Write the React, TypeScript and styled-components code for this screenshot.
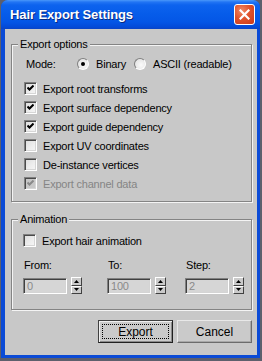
import styled, { createGlobalStyle } from "styled-components";

const GlobalStyle = createGlobalStyle`
  html, body {
    margin: 0;
    padding: 0;
    background: #5d5f6c;
  }
  body {
    width: 262px;
    height: 361px;
    overflow: hidden;
    font-family: "Liberation Sans", Arial, sans-serif;
  }
`;

const options = [
  { label: "Export root transforms", checked: true },
  { label: "Export surface dependency", checked: true },
  { label: "Export guide dependency", checked: true },
  { label: "Export UV coordinates", checked: false },
  { label: "De-instance vertices", checked: false },
  { label: "Export channel data", checked: true, disabled: true },
];

const spinFields = [
  { label: "From:", value: "0" },
  { label: "To:", value: "100" },
  { label: "Step:", value: "2" },
];

export default function App() {
  return (
    <>
      <GlobalStyle />
      <Window>
        <TitleBar>
          <Title>Hair Export Settings</Title>
          <CloseButton>
            <svg width="11" height="11" viewBox="0 0 11 11">
              <path d="M1.5 1.5 L9.5 9.5 M9.5 1.5 L1.5 9.5" stroke="#fff" strokeWidth="2.2" strokeLinecap="square" />
            </svg>
          </CloseButton>
        </TitleBar>
        <Client>
          <Group>
            <Legend>Export options</Legend>
            <GroupBody $pad="3px 0 8px 12px">
              <ModeRow>
                <ModeLabel>Mode:</ModeLabel>
                <RadioOption $width={57}>
                  <Radio $selected />
                  <span>Binary</span>
                </RadioOption>
                <RadioOption>
                  <Radio />
                  <span>ASCII (readable)</span>
                </RadioOption>
              </ModeRow>
              <CheckList>
                {options.map((o) => (
                  <CheckRow key={o.label} $disabled={o.disabled}>
                    <CheckBox checked={o.checked} disabled={o.disabled} />
                    <span>{o.label}</span>
                  </CheckRow>
                ))}
              </CheckList>
            </GroupBody>
          </Group>

          <Group $top={11}>
            <Legend>Animation</Legend>
            <GroupBody $pad="5px 0 15px 11px">
              <CheckRow>
                <CheckBox checked={false} />
                <span>Export hair animation</span>
              </CheckRow>
              <SpinGrid>
                {spinFields.map((f) => (
                  <SpinField key={f.label}>
                    <SpinLabel>{f.label}</SpinLabel>
                    <SpinRow>
                      <NumberBox>{f.value}</NumberBox>
                      <Spinner>
                        <SpinHalf>
                          <svg width="5" height="3" viewBox="0 0 5 3">
                            <path d="M2.5 0 L5 3 L0 3 Z" fill="#000" />
                          </svg>
                        </SpinHalf>
                        <SpinHalf>
                          <svg width="5" height="3" viewBox="0 0 5 3">
                            <path d="M0 0 L5 0 L2.5 3 Z" fill="#000" />
                          </svg>
                        </SpinHalf>
                      </Spinner>
                    </SpinRow>
                  </SpinField>
                ))}
              </SpinGrid>
            </GroupBody>
          </Group>

          <ButtonRow>
            <DialogButton $default>
              <FocusRing>Export</FocusRing>
            </DialogButton>
            <DialogButton>Cancel</DialogButton>
          </ButtonRow>
        </Client>
      </Window>
    </>
  );
}

function CheckBox({ checked, disabled }: { checked: boolean; disabled?: boolean }) {
  return (
    <Box $disabled={disabled}>
      {checked && (
        <svg width="7" height="7" viewBox="0 0 7 7">
          <path d="M0.5 2.5 L2.5 4.5 L6.5 0.5" stroke={disabled ? "#8a8a8a" : "#000"} strokeWidth="2" fill="none" />
        </svg>
      )}
    </Box>
  );
}

const Window = styled.div`
  margin-left: 1px;
  width: 259px;
  height: 358px;
  box-sizing: border-box;
  border-radius: 7px 7px 0 0;
  background: #0b4bd6;
  display: flex;
  flex-direction: column;
  overflow: hidden;
`;

const TitleBar = styled.div`
  height: 29px;
  flex: none;
  display: flex;
  align-items: center;
  justify-content: space-between;
  padding: 0 5px 0 9px;
  background: linear-gradient(
    to bottom,
    #4a98fa 0px,
    #2275f4 2px,
    #0d63ee 5px,
    #065cea 14px,
    #0456e6 22px,
    #034ad8 27px,
    #0b44c4 29px
  );
`;

const Title = styled.span`
  color: #fff;
  font-size: 13px;
  font-weight: bold;
  text-shadow: 1px 1px 0 #0b2a80;
  letter-spacing: -0.1px;
`;

const CloseButton = styled.div`
  width: 21px;
  height: 21px;
  box-sizing: border-box;
  border: 1px solid #fff;
  border-radius: 3px;
  background: radial-gradient(circle at 35% 30%, #f08a66 0%, #e0532c 45%, #c8381a 100%);
  display: flex;
  align-items: center;
  justify-content: center;
`;

const Client = styled.div`
  flex: 1;
  margin: 0 3px 3px 4px;
  background: #c8c8c8;
  padding-top: 9px;
  display: flex;
  flex-direction: column;
  font-size: 11px;
  letter-spacing: -0.2px;
  color: #000;
`;

const Group = styled.fieldset<{ $top?: number }>`
  margin: ${({ $top }) => $top ?? 0}px 5px 0 6px;
  padding: 0;
  border: 1px solid #848484;
  box-shadow: inset 1px 1px 0 #f4f4f4, 1px 1px 0 #f4f4f4;
  min-width: 0;
`;

const Legend = styled.legend`
  margin-left: 6px;
  padding: 0 2px;
  font-size: 11px;
  line-height: 13px;
  background: #c8c8c8;
`;

const GroupBody = styled.div<{ $pad: string }>`
  padding: ${({ $pad }) => $pad};
  display: flex;
  flex-direction: column;
`;

const ModeRow = styled.div`
  height: 19px;
  display: flex;
  align-items: center;
  padding-left: 2px;
`;

const ModeLabel = styled.span`
  width: 51px;
`;

const RadioOption = styled.div<{ $width?: number }>`
  display: flex;
  align-items: center;
  gap: 7px;
  width: ${({ $width }) => ($width ? `${$width}px` : "auto")};
`;

const Radio = styled.div<{ $selected?: boolean }>`
  width: 12px;
  height: 12px;
  box-sizing: border-box;
  border-radius: 50%;
  border: 1px solid;
  border-color: #808080 #ffffff #ffffff #808080;
  background: radial-gradient(circle at 60% 60%, #fafafa 0%, #e6e6e6 70%, #d0d0d0 100%);
  position: relative;
  &::after {
    content: "";
    display: ${({ $selected }) => ($selected ? "block" : "none")};
    position: absolute;
    left: 3px;
    top: 3px;
    width: 4px;
    height: 4px;
    border-radius: 50%;
    background: #000;
  }
`;

const CheckList = styled.div`
  margin-top: 6px;
  display: flex;
  flex-direction: column;
`;

const CheckRow = styled.div<{ $disabled?: boolean }>`
  height: 19px;
  display: flex;
  align-items: center;
  gap: 6px;
  color: ${({ $disabled }) => ($disabled ? "#858585" : "#000")};
`;

const Box = styled.div<{ $disabled?: boolean }>`
  width: 13px;
  height: 13px;
  box-sizing: border-box;
  flex: none;
  border: 1px solid;
  border-color: #808080 #ffffff #ffffff #808080;
  box-shadow: inset 1px 1px 0 #4a4a4a, inset -1px -1px 0 #d6d6d6;
  background: ${({ $disabled }) =>
    $disabled ? "#c8c8c8" : "linear-gradient(135deg, #dcdcdc 0%, #eeeeee 60%, #f6f6f6 100%)"};
  display: flex;
  align-items: center;
  justify-content: center;
`;

const SpinGrid = styled.div`
  margin-top: 9px;
  display: grid;
  grid-template-columns: 84px 78px auto;
`;

const SpinField = styled.div`
  display: flex;
  flex-direction: column;
  gap: 5px;
`;

const SpinLabel = styled.span`
  line-height: 13px;
  padding-left: 1px;
  color: #000;
`;

const SpinRow = styled.div`
  display: flex;
  align-items: center;
  gap: 4px;
`;

const NumberBox = styled.div`
  width: 44px;
  height: 16px;
  box-sizing: border-box;
  border: 1px solid;
  border-color: #808080 #ffffff #ffffff #808080;
  box-shadow: inset 1px 1px 0 #404040, inset -1px -1px 0 #d4d4d4;
  background: #d6d6d6;
  color: #8a8a8a;
  padding-left: 3px;
  line-height: 14px;
`;

const Spinner = styled.div`
  width: 11px;
  height: 17px;
  display: flex;
  flex-direction: column;
`;

const SpinHalf = styled.div`
  flex: 1;
  box-sizing: border-box;
  border: 1px solid;
  border-color: #ffffff #404040 #404040 #ffffff;
  background: #cacaca;
  display: flex;
  align-items: center;
  justify-content: center;
`;

const ButtonRow = styled.div`
  margin-top: 10px;
  padding-right: 5px;
  display: flex;
  justify-content: flex-end;
  gap: 4px;
`;

const DialogButton = styled.div<{ $default?: boolean }>`
  width: 75px;
  height: 23px;
  box-sizing: border-box;
  border: 1px solid;
  border-color: ${({ $default }) =>
    $default ? "#404040 #202020 #202020 #404040" : "#e8e8e8 #6c6c6c #6c6c6c #e8e8e8"};
  box-shadow: ${({ $default }) =>
    $default ? "inset 1px 1px 0 #f0f0f0, inset -1px -1px 0 #8a8a8a" : "inset -1px -1px 0 #a8a8a8"};
  background: #cacaca;
  display: flex;
  align-items: center;
  justify-content: center;
  font-size: 12px;
  letter-spacing: 0;
  padding: 3px;
`;

const FocusRing = styled.div`
  flex: 1;
  align-self: stretch;
  border: 1px dotted #000;
  display: flex;
  align-items: center;
  justify-content: center;
`;
